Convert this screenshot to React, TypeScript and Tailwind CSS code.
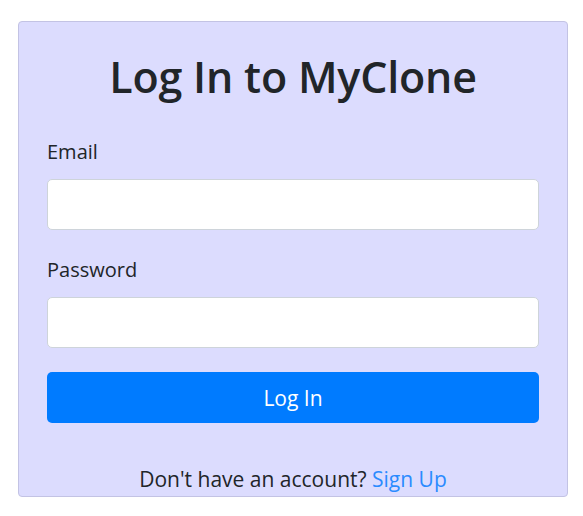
export default function App() {
  return (
    <div className="min-h-[516px] bg-white pt-[21px] font-['Open_Sans','Noto_Sans',sans-serif] text-[#212529]">
      <div className="ml-[18px] w-[550px] h-[476px] rounded-[4px] border border-[#c3c3e4] bg-[#dcdcfe] px-7 pt-7">
        <h1 className="text-center text-[43px] leading-[53px] font-semibold tracking-[-0.2px]">Log In to MyClone</h1>

        <form className="mt-[34px]" onSubmit={(e) => e.preventDefault()}>
          <div className="mb-[25px]">
            <label className="block text-[20px] leading-[30px] mb-3">Email</label>
            <input
              type="email"
              className="block w-full h-[51px] rounded-[5px] border border-[#ced4da] bg-white px-4 text-[20px] outline-none"
            />
          </div>
          <div className="mb-[24px]">
            <label className="block text-[20px] leading-[30px] mb-3">Password</label>
            <input
              type="password"
              className="block w-full h-[51px] rounded-[5px] border border-[#ced4da] bg-white px-4 text-[20px] outline-none"
            />
          </div>
          <button
            type="submit"
            className="block w-full h-[51px] rounded-[5px] bg-[#007bff] text-white text-[21px] leading-[30px]"
          >
            Log In
          </button>
        </form>

        <p className="mt-[41px] text-center text-[21px] leading-[30px]">
          Don't have an account? <a href="#" className="text-[#2a8bff]">Sign Up</a>
        </p>
      </div>
    </div>
  );
}
